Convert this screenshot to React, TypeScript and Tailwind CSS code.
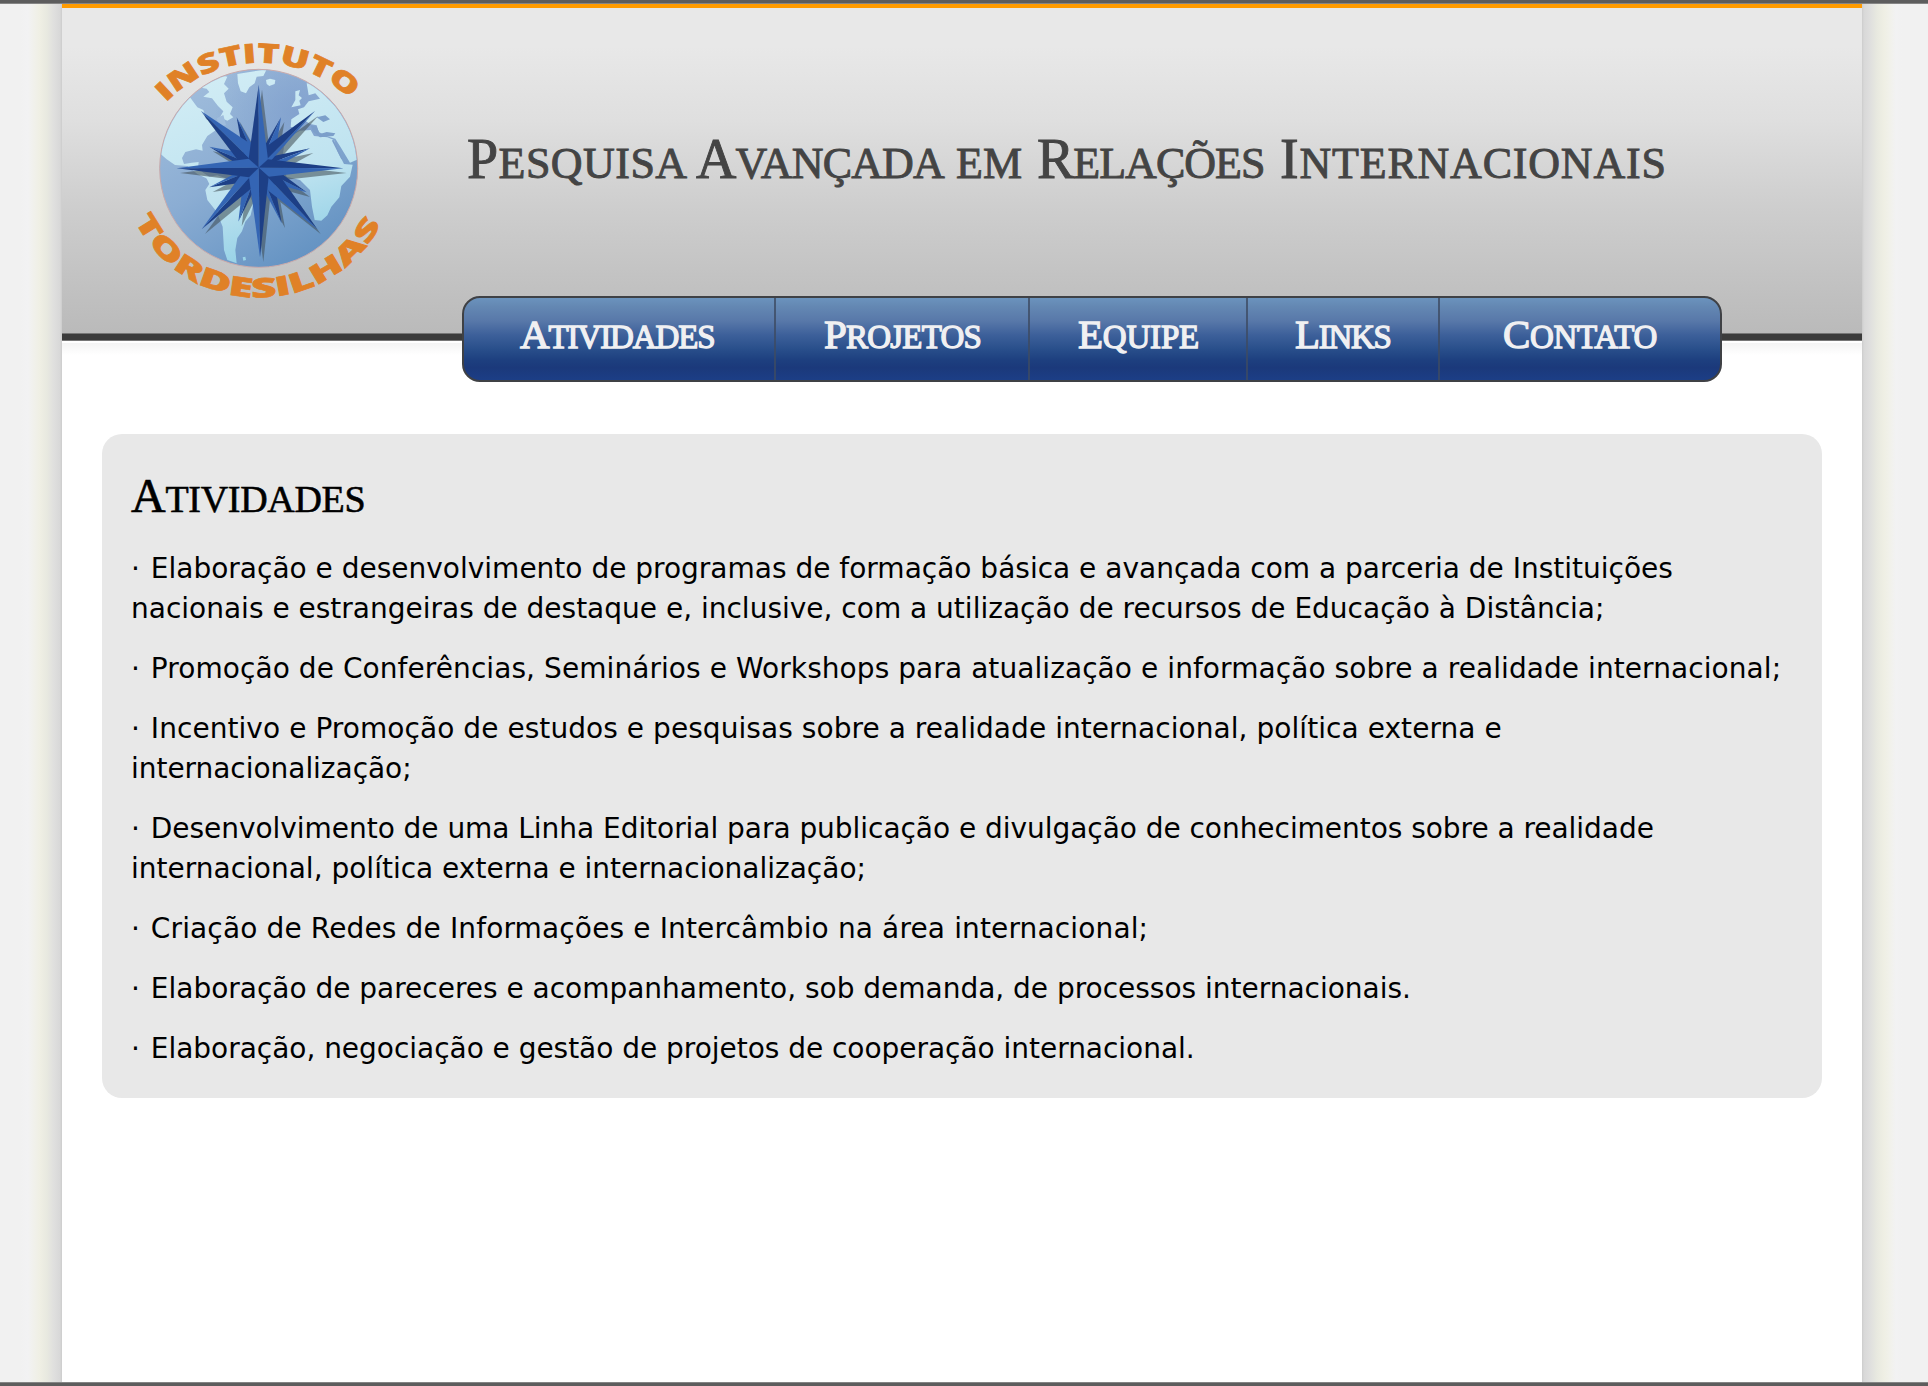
import React from 'react';

const SERIF = "font-['Liberation_Serif',serif] [font-variant-caps:small-caps] whitespace-nowrap";

const titleWords = [
  { text: 'Pesquisa', cls: 'w-[229px] tracking-[0.45px] first-letter:text-[56px]' },
  { text: 'Avançada', cls: 'w-[260px] tracking-[-0.85px] first-letter:text-[56px]' },
  { text: 'em', cls: 'w-[81px]' },
  { text: 'Relações', cls: 'w-[243px] tracking-[-1px] first-letter:text-[56px]' },
  { text: 'Internacionais', cls: 'w-[390px] tracking-[0.8px] first-letter:text-[56px]' },
];

const navItems = [
  { text: 'Atividades', cls: 'w-[312px] pl-[56px] tracking-[-1.1px]' },
  { text: 'Projetos', cls: 'w-[254px] pl-[48px] tracking-[-0.8px]' },
  { text: 'Equipe', cls: 'w-[218px] pl-[48px] tracking-[-0.2px]' },
  { text: 'Links', cls: 'w-[192px] pl-[47px] tracking-[-1.3px]' },
  { text: 'Contato', cls: 'flex-1 pl-[63px] tracking-[-0.3px]' },
];

const paragraphs = [
  [
    { text: 'Elaboração e desenvolvimento de programas de formação básica e avançada com a parceria de Instituições', cls: '' },
    { text: 'nacionais e estrangeiras de destaque e, inclusive, com a utilização de recursos de Educação à Distância;', cls: '' },
  ],
  [{ text: 'Promoção de Conferências, Seminários e Workshops para atualização e informação sobre a realidade internacional;', cls: 'tracking-[0.07px]' }],
  [
    { text: 'Incentivo e Promoção de estudos e pesquisas sobre a realidade internacional, política externa e', cls: 'tracking-[0.06px]' },
    { text: 'internacionalização;', cls: 'tracking-[-0.04px]' },
  ],
  [
    { text: 'Desenvolvimento de uma Linha Editorial para publicação e divulgação de conhecimentos sobre a realidade', cls: 'tracking-[-0.04px]' },
    { text: 'internacional, política externa e internacionalização;', cls: '' },
  ],
  [{ text: 'Criação de Redes de Informações e Intercâmbio na área internacional;', cls: 'tracking-[0.14px]' }],
  [{ text: 'Elaboração de pareceres e acompanhamento, sob demanda, de processos internacionais.', cls: 'tracking-[-0.015px]' }],
  [{ text: 'Elaboração, negociação e gestão de projetos de cooperação internacional.', cls: 'tracking-[-0.03px]' }],
];

/* Each star point: tip, then the base corner on its dark side and on its light side. */
const minorPoints = [
  [350, 262, 372, 385, 400, 350],
  [483, 262, 432, 350, 465, 375],
  [570, 355, 450, 380, 470, 410],
  [560, 487, 470, 420, 440, 455],
  [485, 580, 462, 450, 432, 480],
  [355, 575, 402, 480, 370, 450],
  [268, 472, 385, 455, 365, 420],
  [268, 350, 365, 410, 385, 372],
];
const diagonalPoints = [
  [243, 243, 355, 392, 405, 350],
  [585, 243, 432, 355, 450, 395],
  [592, 598, 478, 435, 430, 470],
  [245, 598, 400, 470, 365, 432],
];
const mainPoints = [
  [416, 165, 386, 386, 444, 388],
  [670, 415, 444, 388, 446, 440],
  [420, 682, 446, 440, 387, 442],
  [170, 415, 387, 442, 386, 386],
];

function Star({ points }: { points: number[][] }) {
  return (
    <>
      {points.map(([x, y, a, b, c, d], i) => (
        <g key={i}>
          <path d={`M${x} ${y}L${a} ${b}L416 413Z`} fill="#1d3f86" />
          <path d={`M${x} ${y}L${c} ${d}L416 413Z`} fill="#3465b4" />
        </g>
      ))}
    </>
  );
}

function Logo() {
  return (
    <svg viewBox="0 0 840 840" className="h-[280px] w-[280px] shrink-0">
      <defs>
        <linearGradient id="sea" x1="0.1" y1="0" x2="0.7" y2="1">
          <stop offset="0" stopColor="#a3bfdd" />
          <stop offset="0.5" stopColor="#8badd3" />
          <stop offset="1" stopColor="#6392c2" />
        </linearGradient>
        <radialGradient id="glow" cx="0.68" cy="0.22" r="0.4">
          <stop offset="0" stopColor="#7e9dcc" stopOpacity="0.7" />
          <stop offset="1" stopColor="#7e9dcc" stopOpacity="0" />
        </radialGradient>
        <linearGradient id="land" gradientUnits="userSpaceOnUse" x1="250" y1="120" x2="450" y2="720">
          <stop offset="0" stopColor="#d2edf5" />
          <stop offset="0.6" stopColor="#bfe3f0" />
          <stop offset="1" stopColor="#8fcfe5" />
        </linearGradient>
        <clipPath id="globe"><circle cx="416" cy="415" r="295" /></clipPath>
        <path id="arcTop" d="M138 218A390 390 0 0 1 693 210" />
        <path id="arcBottom" d="M44 571A416 416 0 0 0 790 570" />
      </defs>
      <circle cx="416" cy="415" r="297" fill="url(#sea)" stroke="#c9a9ab" strokeWidth="3" />
      <g clipPath="url(#globe)">
        <rect x="110" y="110" width="620" height="620" fill="url(#glow)" />
        <g fill="url(#land)">
          <path d="M110 410L100 200L205 195L232 232L250 240L258 268L272 272L288 300L262 318L246 345L248 362L228 358L196 366L186 384L192 402L215 398L236 396L234 414L250 428L268 440L262 446L232 432L202 408L165 405L140 388L122 372Z" />
          <path d="M228 170L262 150L300 135L322 140L312 162L326 176L312 190L320 215L338 232L330 252L340 262L322 272L300 262L310 244L294 228L276 205L250 200L268 186L260 176Z" />
          <path d="M352 132L440 118L430 138L410 140L404 160L388 172L378 190L362 184L354 160Z" />
          <path d="M438 150L450 146L466 150L464 162L448 168L440 162Z" />
          <path d="M258 442L292 436L322 446L345 462L382 486L400 520L392 556L376 575L366 604L352 624L346 660L350 700L322 690L312 660L308 590L290 545L262 510L256 480L268 462Z" />
          <path d="M526 184L540 180L536 196L546 204L538 212L542 226L514 232L526 210ZM560 160L585 162L604 180L622 205L660 240L720 320L720 385L690 398L662 352L646 326L620 318L596 306L590 286L570 282L556 272L540 276L528 296L512 290L514 268L538 252L534 238L552 232L566 214L600 206L586 190L566 196Z" />
          <path d="M512 318L540 302L572 300L582 318L622 322L642 330L652 362L672 402L698 404L690 440L664 468L658 502L634 530L622 556L604 572L584 570L576 530L570 480L540 450L500 440L485 400L492 350Z" />
          <path d="M368 682L376 680L378 690L370 692Z" />
        </g>
        <path d="M572 286L590 290L600 312L620 306L646 310L640 318L600 322L578 304ZM640 328L668 386L664 388L636 332ZM590 262L616 256L630 268L610 276Z" fill="#7c9fca" />
        <path d="M290 265L310 255L318 285L298 292Z" fill="#9fbddd" />
      </g>
      <g transform="translate(10 14)" opacity="0.55" fill="#3f4c52">
        {[...minorPoints, ...diagonalPoints, ...mainPoints].map(([x, y, a, b, c, d], i) => (
          <path key={i} d={`M${x} ${y}L${a} ${b}L416 413L${c} ${d}Z`} />
        ))}
      </g>
      <Star points={minorPoints} />
      <Star points={diagonalPoints} />
      <Star points={mainPoints} />
      <g className="font-['Open_Sans',sans-serif] font-extrabold" fill="#e08127" stroke="#e08127" strokeWidth="2" fontSize="80">
        <text><textPath href="#arcTop" textLength="614" lengthAdjust="spacingAndGlyphs">INSTITUTO</textPath></text>
        <text><textPath href="#arcBottom" textLength="910" lengthAdjust="spacingAndGlyphs">TORDESILHAS</textPath></text>
      </g>
    </svg>
  );
}

export default function App() {
  return (
    <div className="flex h-[1386px] w-[1928px] flex-col overflow-hidden bg-[#f0f0f0]">
      <div className="h-1 shrink-0 border-b border-[#858585] bg-[#5d5d5d]" />
      <div className="flex min-h-0 flex-1">
        <div className="w-[62px] shrink-0 bg-[linear-gradient(to_right,#f1f1f1_20px,#f2f2f3_28px,#f1f1eb_34px,#efefe4_40px,#e8e9e0_47px,#dfdfde_54px,#d8d8d8_60px,#cccccc_62px)]" />
        <div className="flex w-[1800px] shrink-0 flex-col bg-white">
          <header className="flex h-[329px] shrink-0 border-t-4 border-[#ff9b00] bg-[linear-gradient(to_bottom,#e8e8e8_0px,#e8e8e8_38px,#dfdfdf_112px,#cecece_198px,#c1c1c1_280px,#bababa_325px)] pl-[58px]">
            <div className="pt-[22px]"><Logo /></div>
            <h1 className={`${SERIF} ml-[67px] mt-[117px] flex h-[64px] text-[63px] leading-[64px] text-[#444444] [-webkit-text-stroke:0.9px_#444444]`}>
              {titleWords.map((w) => (
                <span key={w.text} className={`block shrink-0 ${w.cls}`}>{w.text}</span>
              ))}
            </h1>
          </header>
          <div className="h-[8px] shrink-0 border-b border-t border-[#777777] bg-[#3b3b3b]" />
          <div className="mt-[2px] h-[12px] shrink-0 bg-linear-to-b from-[#f4f4f4] to-white" />
          <nav className={`${SERIF} z-10 -mt-[59px] ml-[400px] flex h-[86px] w-[1260px] shrink-0 rounded-[18px] border-2 border-[#3f4145] bg-[linear-gradient(to_bottom,#6b93bd_0%,#6488b3_10%,#5878a9_28%,#3d609a_45%,#294f8b_62%,#1d3f7f_76%,#1b397b_85%,#1c3e86_100%)] text-[47px] leading-[48px] text-[#f0f0f2]`}>
            {navItems.map((n) => (
              <a key={n.text} className={`border-r-2 border-[#3d4b63]/80 pt-[10px] [-webkit-text-stroke:1.3px_#f0f0f2] first-letter:text-[41px] last:border-r-0 ${n.cls}`}>{n.text}</a>
            ))}
          </nav>
          <main className="ml-[40px] mt-[52px] h-[664px] w-[1720px] shrink-0 rounded-[20px] bg-[#e8e8e8] pl-[29px]">
            <h2 className={`${SERIF} mt-[32px] h-[56px] text-[54px] leading-[56px] tracking-[-0.3px] text-black [-webkit-text-stroke:0.6px_#000] first-letter:text-[48px]`}>Atividades</h2>
            <div className="mt-[27px] flex flex-col gap-5 whitespace-nowrap font-['DejaVu_Sans',sans-serif] text-[28px] leading-[40px] text-black">
              {paragraphs.map((lines, i) => (
                <p key={i}>
                  {lines.map((l, j) => (
                    <span key={l.text} className={`block ${l.cls}`}>
                      {j === 0 && <span className="tracking-[1px]">{'· '}</span>}
                      {l.text}
                    </span>
                  ))}
                </p>
              ))}
            </div>
          </main>
        </div>
        <div className="flex-1 bg-[linear-gradient(to_left,#f1f1f1_26px,#f2f2f3_32px,#f1f1eb_38px,#efefe4_44px,#e8e9e0_51px,#dfdfde_58px,#d8d8d8_64px,#cccccc_66px)]" />
      </div>
      <div className="h-1 shrink-0 border-t border-[#858585] bg-[#5d5d5d]" />
    </div>
  );
}
